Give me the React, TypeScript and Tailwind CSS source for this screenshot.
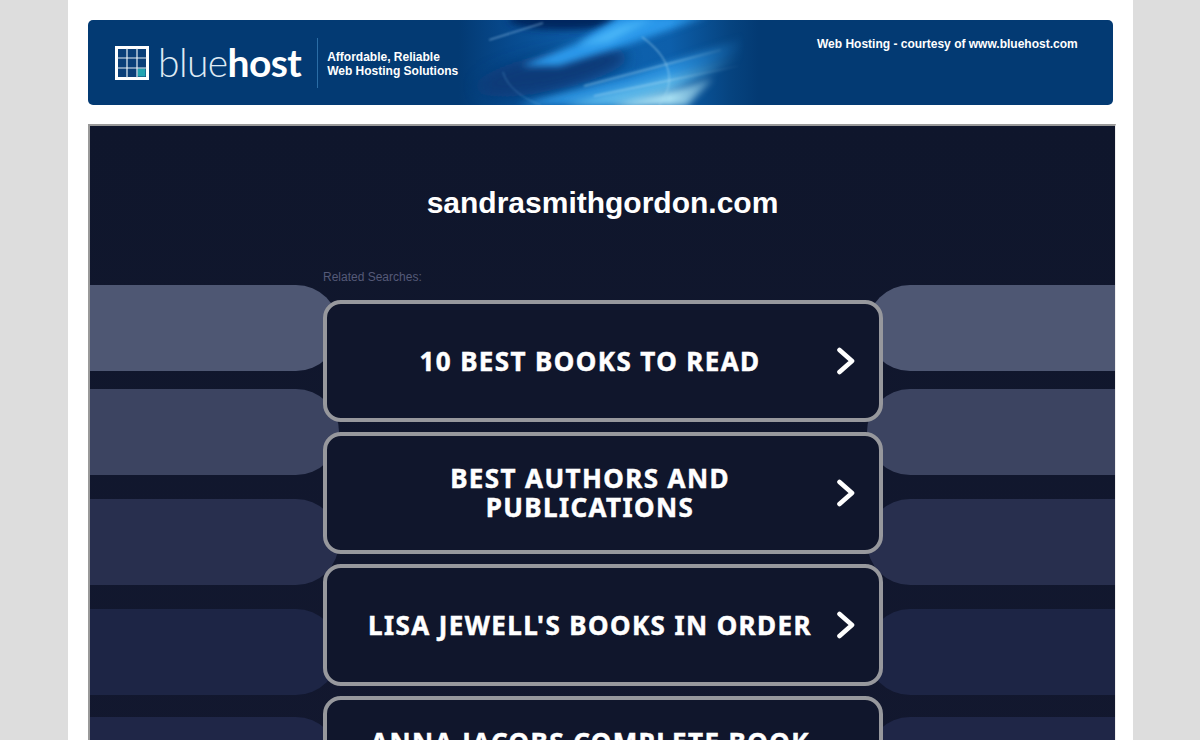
const buttons = [
  { text: "10 BEST BOOKS TO READ" },
  { text: "BEST AUTHORS AND PUBLICATIONS" },
  { text: "LISA JEWELL'S BOOKS IN ORDER" },
  { text: "ANNA JACOBS COMPLETE BOOK LIST" },
];

const pills = [
  { color: "bg-[#4e5773]", margin: "mt-0" },
  { color: "bg-[#3c4461]", margin: "mt-[18px]" },
  { color: "bg-[#282f4e]", margin: "mt-[24px]" },
  { color: "bg-[#1d2545]", margin: "mt-[24px]" },
  { color: "bg-[#1f2647]", margin: "mt-[22px]" },
];

function Chevron() {
  return (
    <svg width="20" height="28" viewBox="0 0 20 28" className="shrink-0">
      <path d="M3.5 3 L16 14 L3.5 25" fill="none" stroke="#ffffff" strokeWidth="4.6" strokeLinecap="round" strokeLinejoin="round" />
    </svg>
  );
}

function Logo() {
  return (
    <svg width="34" height="34" viewBox="0 0 34 34" className="shrink-0">
      <rect x="1.5" y="1.5" width="31" height="31" fill="#0a3f78" stroke="#ffffff" strokeWidth="3" />
      <rect x="22.5" y="22.5" width="8" height="8" fill="#22a3b0" />
      <path d="M12 2 V32 M22 2 V32 M2 12 H32 M2 22 H32" stroke="#e8f0f6" strokeWidth="1.2" />
    </svg>
  );
}

function BannerArt() {
  return (
    <svg width="340" height="85" viewBox="0 0 340 85" preserveAspectRatio="none" className="h-full w-[340px]">
      <defs>
        <linearGradient id="fade" x1="0" x2="1" y1="0" y2="0">
          <stop offset="0" stopColor="#033a73" />
          <stop offset="0.15" stopColor="#074a8e" />
          <stop offset="0.4" stopColor="#0e62ae" />
          <stop offset="0.62" stopColor="#0d5fab" />
          <stop offset="0.8" stopColor="#06437f" />
          <stop offset="0.88" stopColor="#033a73" />
          <stop offset="1" stopColor="#033a73" />
        </linearGradient>
        <linearGradient id="mg" x1="0" x2="340" y1="0" y2="0" gradientUnits="userSpaceOnUse">
          <stop offset="0" stopColor="#000" />
          <stop offset="0.1" stopColor="#fff" />
          <stop offset="0.62" stopColor="#fff" />
          <stop offset="0.84" stopColor="#000" />
        </linearGradient>
        <mask id="m" maskUnits="userSpaceOnUse" x="0" y="0" width="340" height="85">
          <rect width="340" height="85" fill="url(#mg)" />
        </mask>
        <filter id="b1" filterUnits="userSpaceOnUse" x="-40" y="-40" width="420" height="165"><feGaussianBlur stdDeviation="7" /></filter>
        <filter id="b2" filterUnits="userSpaceOnUse" x="-40" y="-40" width="420" height="165"><feGaussianBlur stdDeviation="3.5" /></filter>
        <filter id="b3" filterUnits="userSpaceOnUse" x="-40" y="-40" width="420" height="165"><feGaussianBlur stdDeviation="1.3" /></filter>
        <clipPath id="c"><rect width="340" height="85" /></clipPath>
      </defs>
      <g clipPath="url(#c)">
        <rect width="340" height="85" fill="url(#fade)" />
        <g mask="url(#m)">
          <ellipse cx="105" cy="0" rx="55" ry="10" fill="#06275f" filter="url(#b2)" />
          <ellipse cx="92" cy="52" rx="78" ry="19" transform="rotate(-12 92 52)" fill="#083a78" filter="url(#b1)" />
          <path d="M62 46 L120 22 L160 -4 L250 -4 L170 24 L100 46 Z" fill="#2c98ea" filter="url(#b2)" />
          <path d="M118 26 L160 6 L195 -2 L150 22 Z" fill="#4ab6f8" filter="url(#b2)" />
          <path d="M30 20 L84 3" stroke="#9ccaf0" strokeWidth="1.6" opacity="0.5" filter="url(#b3)" />
          <path d="M58 85 L170 56 L290 16 L290 30 L210 64 L150 85 Z" fill="#2b90dc" filter="url(#b2)" />
          <path d="M105 85 L190 62 L290 34 L215 70 L175 85 Z" fill="#62bcea" opacity="0.85" filter="url(#b2)" />
          <path d="M150 86 L215 70 L255 58 L228 86 Z" fill="#b0e6f6" opacity="0.95" filter="url(#b2)" />
          <path d="M125 66 L262 30" stroke="#bde6f7" strokeWidth="2" opacity="0.35" filter="url(#b3)" />
          <path d="M135 76 L280 46" stroke="#d8f2fb" strokeWidth="1.6" opacity="0.35" filter="url(#b3)" />
          <path d="M183 17 C212 38 218 62 200 85" fill="none" stroke="#a5d8f2" strokeWidth="1.1" opacity="0.6" filter="url(#b3)" />
          <path d="M44 52 C48 66 62 78 82 85" fill="none" stroke="#6fb6e6" strokeWidth="1" opacity="0.45" filter="url(#b3)" />
        </g>
      </g>
    </svg>
  );
}

export default function App() {
  return (
    <div className="h-[740px] overflow-hidden bg-[#dddddd] font-['Liberation_Sans',Arial,sans-serif]">
      <div className="ml-[68px] h-full w-[1065px] bg-white px-5 pt-5">
        <header className="flex h-[85px] w-[1025px] items-stretch overflow-hidden rounded-[5px] bg-[#033a73] text-white">
          <div className="flex w-[371px] shrink-0 items-center pl-[27px]">
            <Logo />
            <span className="ml-[9px] font-['Lato','Open_Sans',sans-serif] text-[39px] leading-none font-light tracking-[-0.6px] text-[#dfeaf3]">
              blue<span className="font-bold text-white">host</span>
            </span>
            <div className="mr-[9px] ml-[16px] h-[50px] w-px shrink-0 bg-[#2b6da6]" />
            <p className="pt-[2px] text-xs leading-[14px] font-bold whitespace-nowrap">
              Affordable, Reliable
              <br />
              Web Hosting Solutions
            </p>
          </div>
          <div className="shrink-0">
            <BannerArt />
          </div>
          <p className="ml-[18px] pt-[17px] text-xs leading-[14px] font-bold whitespace-nowrap">
            Web Hosting - courtesy of www.bluehost.com
          </p>
        </header>

        <main className="mt-[19px] h-[700px] w-[1028px] border-t-2 border-r border-l-2 border-t-[#999999] border-r-[#eeeeee] border-l-[#999999] bg-linear-to-b from-[#0f162c] to-[#13182f]">
          <h1 className="pt-[60px] text-center text-[30px] leading-[34px] font-bold text-white">
            sandrasmithgordon.com
          </h1>
          <p className="mt-[50px] pl-[233px] text-xs leading-[14px] text-[#555a78]">Related Searches:</p>
          <div className="flex">
            <div className="flex w-[249px] shrink-0 flex-col pt-px">
              {pills.map((p, i) => (
                <div key={i} className={`h-[86px] w-full shrink-0 rounded-r-[43px] ${p.color} ${p.margin}`} />
              ))}
            </div>
            <div className="relative z-10 -ml-[16px] flex w-[560px] shrink-0 flex-col gap-[10px] pt-[16px]">
              {buttons.map((b) => (
                <a key={b.text} className="flex h-[122px] shrink-0 items-center rounded-[18px] border-4 border-[#97989d] bg-[#10162c] pr-[23px] pl-[17px] text-white">
                  <span className="flex flex-1 justify-center font-['Noto_Sans',Verdana,sans-serif] text-[26px] leading-[29px] font-bold tracking-[1.4px] [-webkit-text-stroke:0.5px_#ffffff]">
                    <span className="max-w-[460px] text-center">{b.text}</span>
                  </span>
                  <Chevron />
                </a>
              ))}
            </div>
            <div className="-ml-[16px] flex w-[248px] shrink-0 flex-col pt-px">
              {pills.map((p, i) => (
                <div key={i} className={`h-[86px] w-full shrink-0 rounded-l-[43px] ${p.color} ${p.margin}`} />
              ))}
            </div>
          </div>
        </main>
      </div>
    </div>
  );
}
